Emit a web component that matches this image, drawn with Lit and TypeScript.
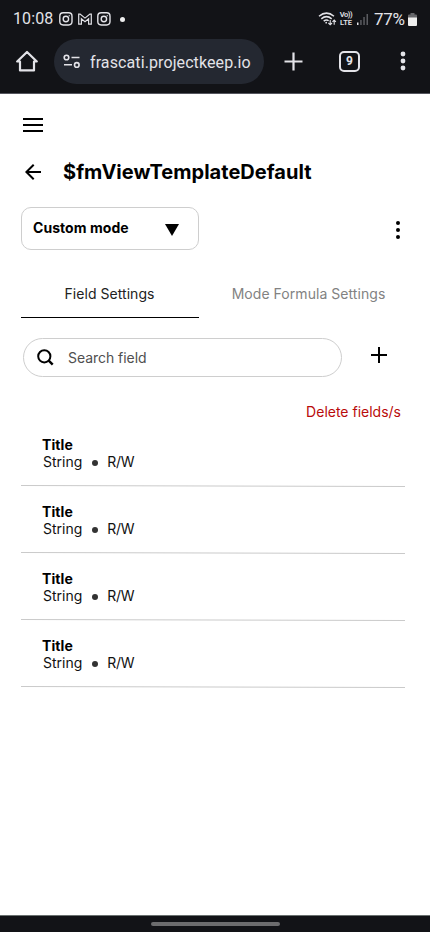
import { LitElement, html, css, svg } from "lit";
import { customElement, property } from "lit/decorators.js";

const instagram = html`<svg width="14" height="14" viewBox="0 0 14 14" fill="none" stroke="currentColor" stroke-width="1.4">
  <rect x="0.8" y="0.8" width="12.2" height="12.2" rx="3.4" /><circle cx="6.9" cy="7" r="2.7" /><circle cx="10.2" cy="3.8" r="0.3" stroke-width="1" />
</svg>`;

@customElement("phone-header")
export class PhoneHeader extends LitElement {
  static styles = css`
    :host { display: block; box-sizing: border-box; height: 94px; background: #121317; color: #e3e3e8; border-bottom: 1.5px solid #55565e; font-family: Roboto, sans-serif; }
    svg { display: block; flex: none; }
    .status { display: flex; align-items: center; height: 38px; padding: 0 13px 0 13px; font-size: 16px; }
    .time { width: 46px; font-size: 16px; line-height: 38px; letter-spacing: 0.1px; }
    .notes { display: flex; align-items: center; gap: 5px; }
    .dot { width: 5px; height: 5px; border-radius: 50%; background: #eee; margin-left: 4px; }
    .right { margin-left: auto; display: flex; align-items: center; }
    .volte { font-size: 7.5px; line-height: 7.8px; font-weight: 600; text-align: center; width: 14px; margin: 0 4px 0 2px; white-space: nowrap; }
    .vo { display: block; letter-spacing: -0.4px; }
    .battery { margin-left: 5px; font-size: 17px; width: 33px; white-space: nowrap; letter-spacing: -0.3px; }
    .cell { margin-left: 1px; }
    .bar { display: flex; align-items: center; height: 46px; padding-left: 16px; }
    .url { display: flex; align-items: center; box-sizing: border-box; width: 210px; height: 45px; margin: 0 20px 0 16px; padding-left: 9px; border-radius: 23px; background: #242831; font-size: 16px; white-space: nowrap; }
    .address { margin-left: 10px; letter-spacing: 0.1px; padding-top: 2px; }
    .tabs { display: flex; align-items: center; justify-content: center; box-sizing: border-box; width: 21px; height: 21px; margin-left: 36px; border: 2px solid #e3e3e8; border-radius: 5px; font-size: 12px; font-weight: 700; }
    .more { margin-left: 40px; }
  `;
  render() {
    return html`
      <div class="status">
        <span class="time">10:08</span>
        <div class="notes">
          ${instagram}
          <svg width="14" height="12" viewBox="0 0 14 12" fill="none" stroke="currentColor" stroke-width="1.2"><path d="M.7 11.2V1.1h1.4L7 5.1l4.9-4h1.4v10.1h-2.7V5.8L7 8.7 3.4 5.8v5.4z" /></svg>
          ${instagram}
          <span class="dot"></span>
        </div>
        <div class="right">
          <svg width="19" height="14" viewBox="0 0 19 14" fill="none" stroke="currentColor" stroke-width="1.5"><path d="M1 4.3Q8.5-2 16 4.3M3.3 6.8Q8.5 2.5 13.7 6.8M5.7 9.2Q8.5 6.9 10.6 8.8" /><circle cx="8.2" cy="10.7" r=".9" fill="currentColor" stroke="none" /><path d="M12.2 8v4.5M10.4 11l1.8 1.8 1.8-1.8M16.2 12.8V8.2M14.5 9.8l1.7-1.7 1.7 1.7" stroke-width="1.1" /></svg>
          <div class="volte"><span class="vo">Vo))</span>LTE</div>
          <svg width="12" height="13" viewBox="0 0 12 13"><path d="M0 9.5h1.5V12H0z" fill="#e3e3e8" /><path d="M3.2 7h1.5v5H3.2zM6.3 4h1.5v8H6.3zM9.5 1H11v11H9.5z" fill="#5b5c61" /></svg>
          <span class="battery">77%</span>
          <svg class="cell" width="9" height="13" viewBox="0 0 9 13"><path d="M2.5 0h4v1.4H8q1 0 1 1V5H0V2.4q0-1 1-1h1.5z" fill="#66676b" /><path d="M0 4.5h9V12q0 1-1 1H1q-1 0-1-1z" fill="#eee" /></svg>
        </div>
      </div>
      <div class="bar">
        <svg width="22" height="22" viewBox="0 0 22 22" fill="none" stroke="currentColor" stroke-width="2.2" stroke-linejoin="round"><path d="M1.2 11.5H4V20.4h14V11.5h2.8L11 2z" /></svg>
        <div class="url">
          <svg width="17" height="15" viewBox="0 0 17 15" fill="none" stroke="currentColor" stroke-width="1.6"><circle cx="3.5" cy="3.5" r="2.3" /><path d="M8.5 3.5h8M1 10.7h8" /><circle cx="13.8" cy="10.9" r="2.3" /></svg>
          <span class="address">frascati.projectkeep.io</span>
        </div>
        <svg width="19" height="19" viewBox="0 0 19 19" stroke="currentColor" stroke-width="2.2"><path d="M9.5.5v18M.5 9.5h18" /></svg>
        <div class="tabs">9</div>
        <svg class="more" width="6" height="20" viewBox="0 0 6 20" fill="currentColor"><circle cx="3" cy="3" r="2.4" /><circle cx="3" cy="10" r="2.4" /><circle cx="3" cy="17" r="2.4" /></svg>
      </div>`;
  }
}

@customElement("field-row")
export class FieldRow extends LitElement {
  @property() name = "";
  @property() type = "";
  @property() access = "";
  static styles = css`
    :host { display: flex; flex-direction: column; justify-content: space-between; height: 51px; margin-bottom: 16px; font-size: 14px; line-height: 17px; color: #111; }
    .name { margin-left: 21px; font-weight: 700; color: #000; letter-spacing: 0.1px; }
    .meta { display: flex; align-items: center; margin-left: 22px; }
    .dot { width: 6px; height: 6px; border-radius: 50%; background: #333; margin: 2px 9px 0 10px; }
    .access { letter-spacing: -0.3px; }
    .rule { display: block; width: 384px; height: 2px; }
  `;
  render() {
    return html`
      <div>
        <div class="name">${this.name}</div>
        <div class="meta"><span>${this.type}</span><span class="dot"></span><span class="access">${this.access}</span></div>
      </div>
      <svg class="rule" viewBox="0 0 384 2">${svg`<path d="M0 .5 384 1.5" stroke="#cacaca" />`}</svg>`;
  }
}

@customElement("app-root")
export class AppRoot extends LitElement {
  private fields = Array.from({ length: 4 }, () => ({ name: "Title", type: "String", access: "R/W" }));

  static styles = css`
    :host { display: flex; flex-direction: column; width: 430px; height: 932px; background: #fff; color: #000; font-family: Inter, sans-serif; overflow: hidden; }
    svg { display: block; flex: none; }
    main { flex: 1; padding: 0 25px 0 21px; }
    .menu { margin: 24px 0 0 2px; }
    .heading { display: flex; align-items: center; height: 30px; margin-top: 25px; padding-left: 4px; }
    h1 { margin: 0 0 0 22px; font-size: 20px; line-height: 30px; font-weight: 700; letter-spacing: 0.03px; }
    .mode { display: flex; align-items: center; justify-content: space-between; height: 43px; margin-top: 20px; padding-right: 4px; }
    .select { display: flex; align-items: center; justify-content: space-between; box-sizing: border-box; width: 178px; height: 43px; padding: 0 19px 0 11px; border: 1px solid #cecece; border-radius: 10px; font-size: 14px; font-weight: 700; letter-spacing: 0.05px; }
    .label { padding-bottom: 2px; }
    .arrow { margin-top: 3px; }
    .kebab { margin-top: 2px; }
    .tabs { display: flex; height: 44px; margin-top: 24px; font-size: 14px; line-height: 40px; text-align: center; }
    .tab { box-sizing: border-box; width: 178px; height: 44px; border-bottom: 1px solid #000; color: #222; letter-spacing: 0.05px; padding-right: 1px; }
    .other { width: 174px; margin-left: 23px; margin-right: -14px; padding: 0 1px 0 0; border: none; color: #828282; white-space: nowrap; }
    .search { display: flex; align-items: center; margin: 20px 0 0 2px; }
    .box { display: flex; align-items: center; box-sizing: border-box; width: 319px; height: 39px; padding-left: 13px; border: 1px solid #cecece; border-radius: 20px; font-size: 14px; color: #4f4f4f; }
    .hint { margin-left: 14px; letter-spacing: -0.05px; }
    .add { margin: -5px 0 0 29px; }
    .delete { margin: 25px 4px 0 0; font-size: 14px; line-height: 20px; text-align: right; color: #b90b0b; }
    .list { margin-top: 14px; }
    footer { display: flex; align-items: center; justify-content: center; box-sizing: border-box; height: 17px; background: #121317; border-top: 1px solid #69706f; }
    .handle { width: 129px; height: 4px; border-radius: 2px; background: #6c6c6e; }
  `;

  render() {
    return html`
      <phone-header></phone-header>
      <main>
        <svg class="menu" width="20" height="14" viewBox="0 0 20 14" stroke="#000" stroke-width="2"><path d="M0 1h20M0 7h20M0 13h20" /></svg>
        <div class="heading">
          <svg width="16" height="16" viewBox="0 0 16 16" fill="none" stroke="#000" stroke-width="2"><path d="M16 8H1.5M8.7.7 1.4 8l7.3 7.3" /></svg>
          <h1>$fmViewTemplateDefault</h1>
        </div>
        <div class="mode">
          <div class="select"><span class="label">Custom mode</span><svg class="arrow" width="14" height="12" viewBox="0 0 14 12"><path d="M0 0h14L7 12z" /></svg></div>
          <svg class="kebab" width="6" height="18" viewBox="0 0 6 18"><circle cx="3" cy="2" r="2" /><circle cx="3" cy="9" r="2" /><circle cx="3" cy="16" r="2" /></svg>
        </div>
        <div class="tabs"><div class="tab">Field Settings</div><div class="tab other">Mode Formula Settings</div></div>
        <div class="search">
          <div class="box">
            <svg width="17" height="17" viewBox="0 0 17 17" fill="none" stroke="#000" stroke-width="2"><circle cx="7.3" cy="7.3" r="6.1" /><path d="m11.7 11.7 4 4" stroke-width="2.4" /></svg>
            <span class="hint">Search field</span>
          </div>
          <svg class="add" width="16" height="16" viewBox="0 0 16 16" stroke="#000" stroke-width="2"><path d="M8 0v16M0 8h16" /></svg>
        </div>
        <div class="delete">Delete fields/s</div>
        <div class="list">
          ${this.fields.map((f) => html`<field-row .name=${f.name} .type=${f.type} .access=${f.access}></field-row>`)}
        </div>
      </main>
      <footer><div class="handle"></div></footer>`;
  }
}
